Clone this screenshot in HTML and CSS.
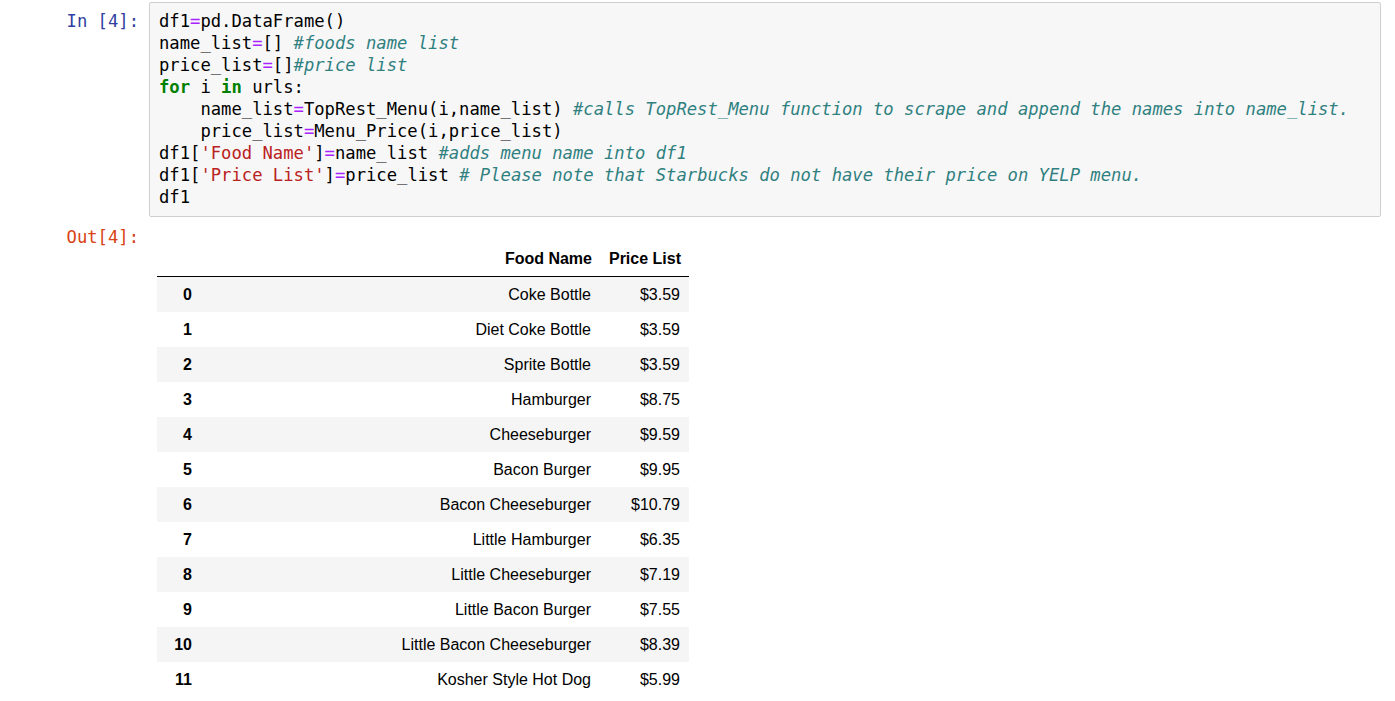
FILE: index.html
```html
<!DOCTYPE html>
<html>
<head>
<meta charset="utf-8">
<link rel="stylesheet" href="styles.css">
</head>
<body>
<div class="cell">
  <div class="row">
    <div class="prompt in-prompt">In&nbsp;[4]:</div>
    <div class="input-box"><pre class="code">df1<span class="op">=</span>pd.DataFrame()
name_list<span class="op">=</span>[] <span class="cm">#foods name list</span>
price_list<span class="op">=</span>[]<span class="cm">#price list</span>
<span class="kw">for</span> i <span class="kw">in</span> urls:
    name_list<span class="op">=</span>TopRest_Menu(i,name_list) <span class="cm">#calls TopRest_Menu function to scrape and append the names into name_list.</span>
    price_list<span class="op">=</span>Menu_Price(i,price_list)
df1[<span class="str">'Food Name'</span>]<span class="op">=</span>name_list <span class="cm">#adds menu name into df1</span>
df1[<span class="str">'Price List'</span>]<span class="op">=</span>price_list <span class="cm"># Please note that Starbucks do not have their price on YELP menu.</span>
df1</pre></div>
  </div>
  <div class="row out-row">
    <div class="prompt out-prompt">Out[4]:</div>
    <div class="output">
      <table class="dataframe">
        <colgroup><col class="c-idx"><col class="c-name"><col class="c-price"></colgroup>
        <thead>
          <tr><th></th><th>Food Name</th><th>Price List</th></tr>
        </thead>
        <tbody>
          <tr><th>0</th><td>Coke Bottle</td><td>$3.59</td></tr>
          <tr><th>1</th><td>Diet Coke Bottle</td><td>$3.59</td></tr>
          <tr><th>2</th><td>Sprite Bottle</td><td>$3.59</td></tr>
          <tr><th>3</th><td>Hamburger</td><td>$8.75</td></tr>
          <tr><th>4</th><td>Cheeseburger</td><td>$9.59</td></tr>
          <tr><th>5</th><td>Bacon Burger</td><td>$9.95</td></tr>
          <tr><th>6</th><td>Bacon Cheeseburger</td><td>$10.79</td></tr>
          <tr><th>7</th><td>Little Hamburger</td><td>$6.35</td></tr>
          <tr><th>8</th><td>Little Cheeseburger</td><td>$7.19</td></tr>
          <tr><th>9</th><td>Little Bacon Burger</td><td>$7.55</td></tr>
          <tr><th>10</th><td>Little Bacon Cheeseburger</td><td>$8.39</td></tr>
          <tr><th>11</th><td>Kosher Style Hot Dog</td><td>$5.99</td></tr>
        </tbody>
      </table>
    </div>
  </div>
</div>
</body>
</html>
```
FILE: styles.css
```css
html, body {
  margin: 0;
  padding: 0;
  background: #ffffff;
  overflow: hidden;
}
body {
  font-family: "Liberation Sans", Arial, sans-serif;
  color: #000;
}
.cell {
  padding-top: 2px;
}
.row {
  display: flex;
  align-items: flex-start;
}
.prompt {
  width: 139px;
  padding-right: 10px;
  box-sizing: content-box;
  text-align: right;
  font-family: "DejaVu Sans Mono", monospace;
  font-size: 17.2px;
  line-height: 22px;
  white-space: nowrap;
  flex: none;
}
.in-prompt {
  color: #303F9F;
  padding-top: 8px;
}
.out-prompt {
  color: #D84315;
  padding-top: 9px;
}
.input-box {
  flex: 1;
  margin-right: 14px;
  background: #f7f7f7;
  border: 1px solid #cfcfcf;
  border-radius: 2px;
  padding: 7px 9px 8px 9px;
}
.code {
  margin: 0;
  font-family: "DejaVu Sans Mono", monospace;
  font-size: 17.2px;
  line-height: 22px;
  color: #000;
  white-space: pre;
}
.op { color: #AA22FF; }
.kw { color: #008000; font-weight: bold; }
.cm { color: #2f8080; font-style: italic; }
.str { color: #BA2121; }
.output {
  padding: 24px 0 0 8px;
}
.dataframe {
  border-collapse: collapse;
  border-spacing: 0;
  table-layout: fixed;
  width: 532px;
  font-size: 16px;
  color: #000;
}
.c-idx { width: 43px; }
.c-name { width: 400px; }
.c-price { width: 89px; }
.dataframe th,
.dataframe td {
  text-align: right;
  vertical-align: middle;
  padding: 8px;
  line-height: 19px;
  white-space: nowrap;
  border: none;
}
.dataframe td {
  padding-right: 9px;
}
.dataframe th {
  font-weight: bold;
}
.dataframe thead {
  border-bottom: 1px solid #000;
}
.dataframe tbody tr:nth-child(odd) {
  background: #f5f5f5;
}
```
